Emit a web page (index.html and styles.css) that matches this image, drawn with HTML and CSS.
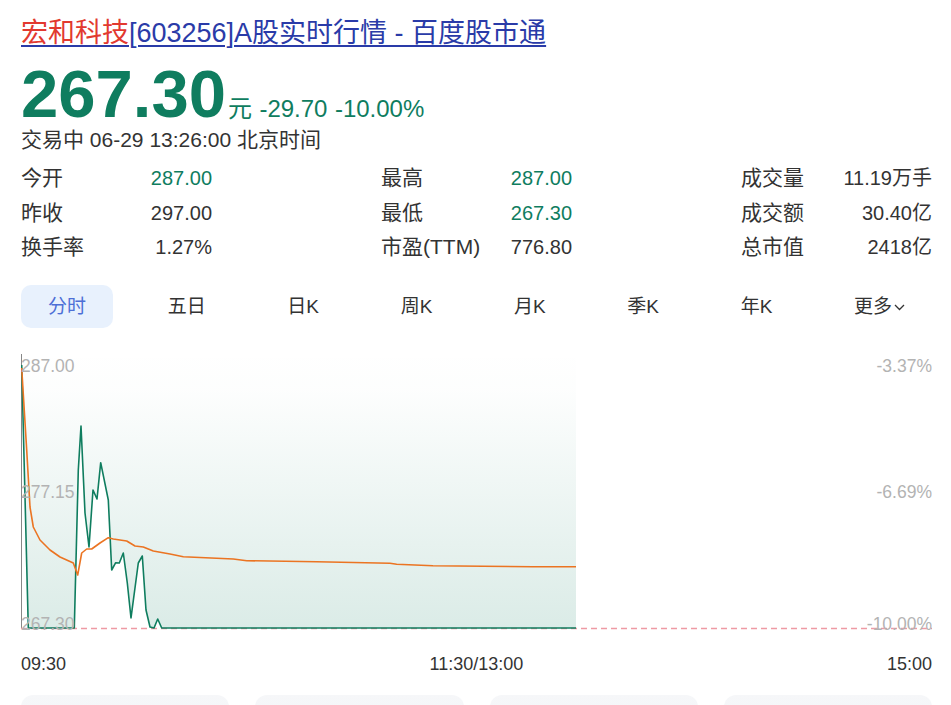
FILE: index.html
```html
<!DOCTYPE html>
<html lang="zh-CN">
<head>
  <meta charset="UTF-8" />
  <meta name="viewport" content="width=device-width, initial-scale=1.0" />
  <title>宏和科技[603256]A股实时行情 - 百度股市通</title>
  <link rel="stylesheet" href="styles.css">
</head>
<body>
<div class="page">
  <div class="head">
    <a class="title" href="#"><span class="name">宏和科技</span>[603256]A股实时行情 - 百度股市通</a>
  </div>

  <div class="quote">
    <span class="price">267.30</span><span class="unit">元</span>
    <span class="change">-29.70</span>
    <span class="change">-10.00%</span>
  </div>
  <div class="status">交易中 06-29 13:26:00 北京时间</div>

  <div class="stats">
    <div class="group">
      <div class="row"><span class="label">今开</span><span class="val down">287.00</span></div>
      <div class="row"><span class="label">昨收</span><span class="val">297.00</span></div>
      <div class="row"><span class="label">换手率</span><span class="val">1.27%</span></div>
    </div>
    <div class="group">
      <div class="row"><span class="label">最高</span><span class="val down">287.00</span></div>
      <div class="row"><span class="label">最低</span><span class="val down">267.30</span></div>
      <div class="row"><span class="label">市盈(TTM)</span><span class="val">776.80</span></div>
    </div>
    <div class="group">
      <div class="row"><span class="label">成交量</span><span class="val">11.19万手</span></div>
      <div class="row"><span class="label">成交额</span><span class="val">30.40亿</span></div>
      <div class="row"><span class="label">总市值</span><span class="val">2418亿</span></div>
    </div>
  </div>

  <div class="tabs">
    <div class="tab active">分时</div>
    <div class="tab">五日</div>
    <div class="tab">日K</div>
    <div class="tab">周K</div>
    <div class="tab">月K</div>
    <div class="tab">季K</div>
    <div class="tab">年K</div>
    <div class="tab">更多<svg class="chev" width="11" height="7" viewBox="0 0 11 7"><path d="M1 1l4.5 4.5L10 1" fill="none" stroke="#333" stroke-width="1.3"/></svg></div>
  </div>

  <div class="chart">
    <svg width="911" height="290" viewBox="0 0 911 290">
      <defs>
        <linearGradient id="area" x1="0" y1="0" x2="0" y2="278" gradientUnits="userSpaceOnUse">
          <stop offset="0" stop-color="#0f7d5f" stop-opacity="0"/>
          <stop offset="0.15" stop-color="#0f7d5f" stop-opacity="0.01"/>
          <stop offset="1" stop-color="#0f7d5f" stop-opacity="0.15"/>
        </linearGradient>
      </defs>
      <!-- area above the price line -->
      <polygon fill="url(#area)" points="0.7,15 7.3,278 53.3,278 57.3,120 60,76 64,163 68,197 72,140 76,149 79.7,112.7 87.3,150 90.7,220 94.7,212.7 98.3,213 102.3,203 106.3,233 110,268 117.3,213 121.3,206 125,260 129,277 133,278 136.7,269 140.7,278 555,278 555,0 0.7,0"/>
      <line x1="0.5" y1="4" x2="0.5" y2="278" stroke="#555" stroke-width="1" opacity="0.7"/>
      <line x1="0" y1="278.5" x2="911" y2="278.5" stroke="#ee9aa4" stroke-width="1.5" stroke-dasharray="6 4"/>
      <!-- price -->
      <polyline fill="none" stroke="#0f7d5f" stroke-width="1.6" stroke-linejoin="round" points="0.7,15 7.3,278 53.3,278 57.3,120 60,76 64,163 68,197 72,140 76,149 79.7,112.7 87.3,150 90.7,220 94.7,212.7 98.3,213 102.3,203 106.3,233 110,268 117.3,213 121.3,206 125,260 129,277 133,278 136.7,269 140.7,278 555,278"/>
      <!-- average -->
      <polyline fill="none" stroke="#eb7422" stroke-width="1.6" stroke-linejoin="round" points="0.7,18 5.7,100 9,157 12.3,177 19,190 29,200 39,207 52.3,213 56.7,225 60.7,203 65.7,199 70.7,199 79,193 87.3,187.7 92.3,189 105.7,191 114,196 122.3,197 132.3,201 149,204 162.3,206.7 212.3,209 225.7,210.7 295.7,211.7 369,213.3 375.7,214.3 412,215.7 462,216.3 512,216.7 555,216.7"/>
      <g class="axis">
        <text x="0" y="22">287.00</text>
        <text x="0" y="148">277.15</text>
        <text x="0" y="280">267.30</text>
        <text x="911" y="22" text-anchor="end">-3.37%</text>
        <text x="911" y="148" text-anchor="end">-6.69%</text>
        <text x="911" y="280" text-anchor="end">-10.00%</text>
      </g>
    </svg>
  </div>

  <div class="times">
    <span>09:30</span>
    <span>11:30/13:00</span>
    <span>15:00</span>
  </div>

  <div class="cards">
    <div class="card"></div>
    <div class="card"></div>
    <div class="card"></div>
    <div class="card"></div>
  </div>
</div>
</body>
</html>
```

FILE: styles.css
```css
body {
  margin: 0;
  padding: 0;
  background: #fff;
  color: #333;
  font-family: "Liberation Sans", "Noto Sans CJK SC", sans-serif;
  overflow: hidden;
}
.page {
  padding: 16px 19px 0 21px;
}
.head {
  line-height: 35px;
}
.title {
  font-size: 27px;
  color: #2a3ba8;
  text-decoration: underline;
  text-underline-offset: 3px;
  text-decoration-thickness: 2px;
}
.title .name {
  color: #e2392f;
}
.quote {
  margin-top: 6px;
  height: 67px;
  line-height: 67px;
  color: #0f7d5f;
  white-space: nowrap;
}
.price {
  font-size: 67px;
  font-weight: 700;
  line-height: 1;
}
.unit {
  font-size: 24px;
  margin-left: 2px;
}
.change {
  font-size: 24px;
  margin-left: 3px;
}
.status {
  font-size: 21px;
  line-height: 26px;
  color: #333;
}
.stats {
  margin-top: 8px;
  display: flex;
  justify-content: space-between;
}
.group {
  width: 191px;
}
.row {
  display: flex;
  justify-content: space-between;
  line-height: 34.5px;
  font-size: 20px;
}
.label {
  font-size: 21px;
}
.val {
  color: #333;
}
.val.down {
  color: #0f7d5f;
}
.tabs {
  margin-top: 20px;
  display: flex;
  justify-content: space-between;
  align-items: center;
}
.tab {
  height: 43px;
  line-height: 43px;
  padding: 0 27px;
  font-size: 19px;
  color: #333;
  border-radius: 10px;
  display: flex;
  align-items: center;
}
.tab.active {
  background: #e8f1fd;
  color: #4d6fd6;
}
.chev {
  margin-left: 2px;
  margin-top: 2px;
}
.chart {
  margin-top: 22px;
  height: 290px;
}
.chart svg {
  display: block;
}
.axis text {
  font-family: "Liberation Sans", sans-serif;
  font-size: 17.5px;
  fill: #b3b3b3;
}
.times {
  margin-top: 12px;
  display: flex;
  justify-content: space-between;
  font-size: 18px;
  line-height: 24px;
  color: #333;
}
.cards {
  margin-top: 19px;
  display: grid;
  grid-template-columns: repeat(4, 1fr);
  gap: 26px;
}
.card {
  height: 80px;
  border-radius: 12px;
  background: linear-gradient(#f6f7f9, #eef1f5);
}
```
